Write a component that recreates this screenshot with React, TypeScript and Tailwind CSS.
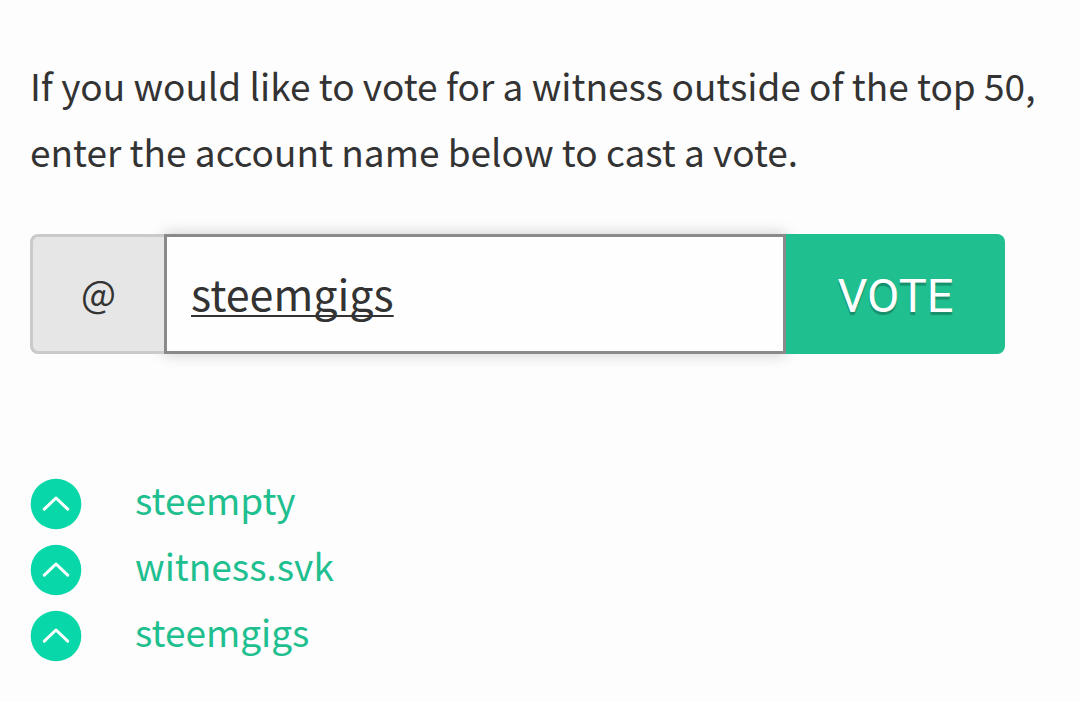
import React, { useState } from 'react';

const witnesses = ['steempty', 'witness.svk', 'steemgigs'];

const UpvoteIcon: React.FC = () => (
  <svg viewBox="0 0 52 52" className="size-[52px]" fill="none" aria-hidden="true">
    <circle cx="26" cy="26" r="25.3" fill="#07d7a9" />
    <path
      d="M14.3 31.2 L26 20 L37.7 31.2"
      stroke="#fff"
      strokeWidth="3"
      strokeLinecap="round"
      strokeLinejoin="round"
    />
  </svg>
);

export default function App() {
  const [account, setAccount] = useState('steemgigs');
  const [voted, setVoted] = useState<string[]>(witnesses);

  const handleSubmit = (e: React.FormEvent) => {
    e.preventDefault();
    if (account && !voted.includes(account)) {
      setVoted([...voted, account]);
    }
  };

  return (
    <main className="min-h-screen bg-[#fdfdfd] px-[30px] pt-[52px] pb-8 font-['Noto_Sans_CJK_SC',sans-serif] text-[37px] leading-[66px] text-[#333]">
      <p>
        If you would like to vote for a witness outside of the top 50, enter the account name below to cast a vote.
      </p>

      <form onSubmit={handleSubmit} className="mt-[50px] mr-[45px] flex h-[120px]">
        <label
          htmlFor="account"
          className="relative flex w-[134px] items-center justify-center rounded-l-lg border-3 border-r-0 border-[#cacaca] bg-[#e6e6e6] pb-1"
        >
          @
        </label>
        <input
          id="account"
          type="text"
          value={account}
          onChange={(e) => setAccount(e.target.value)}
          autoComplete="off"
          spellCheck={false}
          className="min-w-0 flex-1 border-3 border-[#8a8a8a] bg-[#fefefe] px-6 pb-1 text-[43px] underline decoration-2 underline-offset-4 shadow-[0_0_14px_#cacaca] outline-none [text-decoration-skip-ink:none]"
        />
        <button
          type="submit"
          className="relative w-[219px] rounded-r-lg bg-[#1fbf8f] pt-1 font-[Roboto,sans-serif] text-[47px] text-white uppercase [text-shadow:0_3px_1px_rgba(0,0,0,0.25)]"
        >
          Vote
        </button>
      </form>

      <ul className="mt-[117px] leading-[56px]">
        {voted.map((name) => (
          <li key={name} className="flex items-start gap-[53px]">
            <button type="button" aria-label={`Vote for ${name}`} className="py-[7px]">
              <UpvoteIcon />
            </button>
            <a href={`#${name}`} className="text-[#1fbf8f]">
              {name}
            </a>
          </li>
        ))}
      </ul>
    </main>
  );
}
